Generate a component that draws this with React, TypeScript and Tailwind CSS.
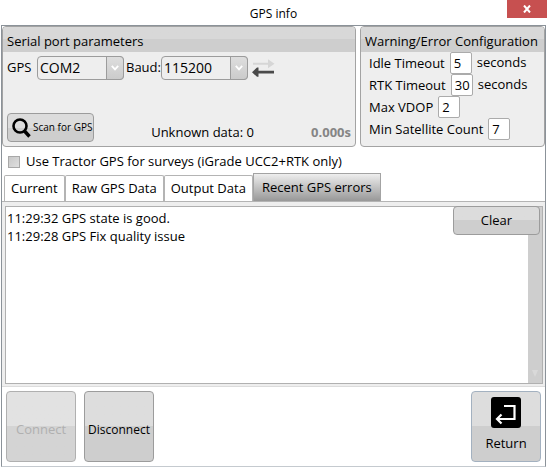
import { useState } from "react";
import type { ReactNode } from "react";

const TABS = ["Current", "Raw GPS Data", "Output Data", "Recent GPS errors"];

const LOG = [
  { time: "11:29:32", text: "GPS state is good." },
  { time: "11:29:28", text: "GPS Fix quality issue" },
];

const WARNINGS = [
  { id: "idle", label: "Idle Timeout", value: "5", unit: "seconds" },
  { id: "rtk", label: "RTK Timeout", value: "30", unit: "seconds" },
  { id: "vdop", label: "Max VDOP", value: "2" },
  { id: "sats", label: "Min Satellite Count", value: "7" },
];

const Group = ({
  title,
  className,
  children,
}: {
  title: string;
  className: string;
  children: ReactNode;
}) => (
  <section
    className={`flex flex-col overflow-hidden rounded-sm border border-[#a3a3a3] bg-[#eeeeee] ${className}`}
  >
    <h2 className="h-[25px] bg-linear-to-b from-[#d8d8d8] from-50% to-[#cecece] to-50% pl-1 leading-7 whitespace-nowrap">
      {title}
    </h2>
    {children}
  </section>
);

const Combo = ({ id, options }: { id: string; options: string[] }) => (
  <div className="relative h-6 w-[87px]">
    <select
      id={id}
      className="h-full w-full appearance-none rounded-sm border border-[#9c9c9c] bg-[#eeeeee] pl-0.5 text-sm leading-5"
    >
      {options.map((option) => (
        <option key={option}>{option}</option>
      ))}
    </select>
    <span className="pointer-events-none absolute inset-y-0 right-0 flex w-[18px] items-center justify-center rounded-r-sm border border-[#9c9c9c] bg-linear-to-b from-[#dedede] to-[#cbcbcb]">
      <svg width="8" height="6" viewBox="0 0 8 6" fill="none">
        <path d="M0.8 0.8L4 4.4L7.2 0.8" stroke="#fff" strokeWidth="1.8" />
      </svg>
    </span>
  </div>
);

const TransferArrows = () => (
  <svg className="ml-1" width="23" height="18" viewBox="0 0 23 18">
    <path d="M1 3.8H16V0.3L22.5 4.8L16 9.3V5.8H1Z" fill="#d6d6d6" />
    <path
      d="M22 11.8V14.6H6.5V17.8H5L0 13.2L5 8.6H6.5V11.8Z"
      fill="#4a4a4a"
    />
  </svg>
);

const App = () => {
  const [activeTab, setActiveTab] = useState("Recent GPS errors");
  const [log, setLog] = useState(LOG);

  return (
    <div className="flex min-h-screen flex-col bg-white font-['Open_Sans','Noto_Sans',sans-serif] text-[13px] text-black">
      <header className="grid h-[25px] grid-cols-[1fr_auto_1fr]">
        <h1 className="col-start-2 text-[12px] leading-7">GPS info</h1>
        <button
          aria-label="Close"
          className="flex h-[18px] w-10 items-center justify-center justify-self-end bg-[#c75050]"
        >
          <svg width="8" height="8" viewBox="0 0 8 8" fill="none">
            <path d="M1 0.5L7 7.5M7 0.5L1 7.5" stroke="#fff" strokeWidth="2" />
          </svg>
        </button>
      </header>

      <main className="mx-px mb-px flex flex-1 flex-col border border-[#8b9299] border-b-[#c5cacf]">
        <div className="flex gap-1">
          <Group title="Serial port parameters" className="flex-1">
            <div className="flex items-center pt-1 pl-1">
              <label htmlFor="port" className="w-[30px]">
                GPS
              </label>
              <Combo id="port" options={["COM2", "COM1"]} />
              <label htmlFor="baud" className="w-[37px] pl-0.5">
                Baud:
              </label>
              <Combo id="baud" options={["115200", "9600"]} />
              <TransferArrows />
            </div>
            <div className="mt-auto flex items-end justify-between pr-1 pb-1 pl-1">
              <button className="flex h-[29px] w-[87px] items-center rounded-sm border border-[#9c9c9c] bg-linear-to-b from-[#dcdcdc] from-50% to-[#cecece] to-50% pl-1 text-[10px] whitespace-nowrap">
                <svg className="mr-0.5 shrink-0" width="19" height="20" viewBox="0 0 19 20" fill="none">
                  <circle cx="8" cy="8" r="6.5" stroke="#000" strokeWidth="2.6" />
                  <path d="M12.5 13L17.5 18.5" stroke="#000" strokeWidth="3.4" />
                </svg>
                Scan for GPS
              </button>
              <span>Unknown data: 0</span>
              <span className="font-bold text-[#858585]">0.000s</span>
            </div>
          </Group>

          <Group title="Warning/Error Configuration" className="w-[185px]">
            <div className="flex flex-col pb-1.5 pl-2">
              {WARNINGS.map((item) => (
                <div key={item.id} className="flex items-center gap-[5px]">
                  <label htmlFor={item.id} className="leading-5">
                    {item.label}
                  </label>
                  <input
                    id={item.id}
                    defaultValue={item.value}
                    className="h-[22px] w-[22px] rounded-xs border border-[#ababab] bg-white pl-[3px]"
                  />
                  {item.unit && <span>{item.unit}</span>}
                </div>
              ))}
            </div>
          </Group>
        </div>

        <label className="flex h-[26px] items-center gap-1.5 pt-1 pl-1.5">
          <input
            type="checkbox"
            className="size-3 appearance-none border border-[#a8a8a8] bg-linear-to-br from-[#c8c8c8] to-[#e0e0e0] checked:bg-[#555555]"
          />
          Use Tractor GPS for surveys (iGrade UCC2+RTK only)
        </label>

        <div role="tablist" className="flex h-[28px] items-end pl-0.5">
          {TABS.map((tab) => (
            <button
              key={tab}
              role="tab"
              aria-selected={tab === activeTab}
              onClick={() => setActiveTab(tab)}
              className={
                tab === activeTab
                  ? "h-7 border border-b-0 border-[#a3a3a3] bg-linear-to-b from-[#eeeeee] to-[#989898] px-2"
                  : "h-[26px] rounded-t-xs border border-b-0 border-[#b4b4b4] bg-white px-1.5"
              }
            >
              {tab}
            </button>
          ))}
        </div>

        <div className="flex flex-1 flex-col border-y border-[#b4b4b4] border-b-[#dcdcdc] bg-[#eeeeee] pt-1 pr-0.5 pb-0.5 pl-[3px]">
          <div className="relative flex min-h-32 flex-1 border border-[#b0b0b0] bg-white">
            <ul className="flex-1 pt-0.5 pl-px">
              {log.map((entry) => (
                <li key={entry.time} className="leading-[18px]">
                  {entry.time} {entry.text}
                </li>
              ))}
            </ul>
            <div className="flex w-3.5 items-end justify-center bg-[#cecece] pb-1.5">
              <svg width="6" height="7" viewBox="0 0 6 7">
                <path d="M0 0H6L3 7Z" fill="#d9d9d9" />
              </svg>
            </div>
            <button
              onClick={() => setLog([])}
              className="absolute -top-px right-0.5 h-[29px] w-[87px] rounded-sm border border-[#9c9c9c] bg-linear-to-b from-[#dcdcdc] from-50% to-[#cecece] to-50%"
            >
              Clear
            </button>
          </div>
        </div>

        <footer className="flex gap-2 px-1 py-1">
          <button
            disabled
            className="h-[71px] w-[70px] rounded-sm border border-[#b0b0b0] bg-linear-to-b from-[#e2e2e2] from-50% to-[#d4d4d4] to-50% pt-1.5 text-[#b0b0b0]"
          >
            Connect
          </button>
          <button className="h-[71px] w-[70px] rounded-sm border border-[#9c9c9c] bg-linear-to-b from-[#dddddd] from-50% to-[#cecece] to-50% pt-1.5 text-[12px]">
            Disconnect
          </button>
          <button className="ml-auto flex h-[71px] w-[70px] flex-col items-center gap-1.5 rounded-sm border border-[#a3b1c0] bg-linear-to-b from-[#dddddd] from-50% to-[#cecece] to-50% pt-[5px]">
            <svg width="30" height="31" viewBox="0 0 30 31" fill="none">
              <rect width="30" height="31" rx="3" fill="#000" />
              <path
                d="M13 9H23.5V22H6M10.5 17.5L6 22L10.5 26.5"
                stroke="#fff"
                strokeWidth="2.2"
              />
            </svg>
            Return
          </button>
        </footer>
      </main>
    </div>
  );
};

export default App;
